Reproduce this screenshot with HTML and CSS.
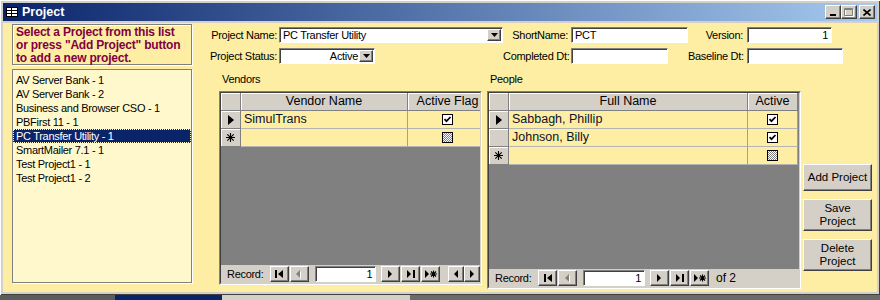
FILE: index.html
```html
<!DOCTYPE html>
<html lang="en">
  <head>
    <meta charset="UTF-8" />
    <title>Project</title>
    <link rel="stylesheet" href="styles.css">
  </head>
  <body>
    <div class="window">
      <div class="titlebar">
        <svg class="ticon" width="12" height="10" viewBox="0 0 12 10">
          <rect x="0.5" y="0.5" width="11" height="9" fill="#fff" stroke="#000" />
          <path d="M1 3.5H11M1 6.5H11M5.5 1V9" stroke="#000" />
        </svg>
        <span class="ttext">Project</span>
        <div class="tbtns">
          <span class="tbtn"><svg width="8" height="8" viewBox="0 0 8 8"><rect x="1" y="6" width="6" height="2" /></svg></span>
          <span class="tbtn"><svg width="10" height="9" viewBox="0 0 10 9"><path d="M1.5 1.5h8v7h-8z" fill="none" stroke="#fff" /><path d="M0.5 0.5h8v7h-8zM0.5 1.5h8" fill="none" stroke="#808080" /></svg></span>
          <span class="tbtn close"><svg width="8" height="7" viewBox="0 0 8 7"><path d="M0.5 0.5L7.5 6.5M7.5 0.5L0.5 6.5" stroke="#000" stroke-width="1.6" /></svg></span>
        </div>
      </div>

      <div class="form">
        <div class="side">
          <div class="hint">Select a Project from this list<br />or press "Add Project" button<br />to add a new project.</div>
          <ul class="plist">
            <li>AV Server Bank - 1</li>
            <li>AV Server Bank - 2</li>
            <li>Business and Browser CSO - 1</li>
            <li>PBFirst 11 - 1</li>
            <li class="sel">PC Transfer Utility - 1</li>
            <li>SmartMailer 7.1 - 1</li>
            <li>Test Project1 - 1</li>
            <li>Test Project1 - 2</li>
          </ul>
        </div>

        <div class="main">
          <div class="fields">
            <label class="l1">Project Name:</label>
            <div class="field combo">PC Transfer Utility<span class="drop"><svg width="7" height="4" viewBox="0 0 7 4"><path d="M0 0H7L3.5 4Z" /></svg></span></div>
            <label class="l2">ShortName:</label>
            <div class="field">PCT</div>
            <label class="l3">Version:</label>
            <div class="field num ver">1</div>

            <label class="l1">Project Status:</label>
            <div class="field combo status"><span class="val">Active</span><span class="drop"><svg width="7" height="4" viewBox="0 0 7 4"><path d="M0 0H7L3.5 4Z" /></svg></span></div>
            <label class="l2 lc">Completed Dt:</label>
            <div class="field cdt"></div>
            <label class="l3">Baseline Dt:</label>
            <div class="field bdt"></div>
          </div>

          <div class="lower">
            <div class="group vendors">
              <div class="caption">Vendors</div>
              <div class="sheet">
                <div class="inner">
                  <div class="body">
                    <div class="tbl v">
                      <div class="hd"></div>
                      <div class="hd">Vendor Name</div>
                      <div class="hd">Active Flag</div>

                      <div class="rs"><svg width="6" height="10" viewBox="0 0 6 10"><path d="M0 0L6 5L0 10Z" /></svg></div>
                      <div class="cell">SimulTrans</div>
                      <div class="cell ck"><svg width="11" height="11" viewBox="0 0 11 11"><rect x="0.5" y="0.5" width="10" height="10" fill="#fff" stroke="#000" /><path d="M2.5 5.2L4.5 7.2L8.5 3" fill="none" stroke="#000" stroke-width="1.7" /></svg></div>

                      <div class="rs"><svg width="9" height="9" viewBox="0 0 9 9"><path d="M4.5 0V9M0 4.5H9M1.3 1.3L7.7 7.7M7.7 1.3L1.3 7.7" stroke="#000" stroke-width="1.1" /></svg></div>
                      <div class="cell"></div>
                      <div class="cell ck"><span class="null"></span></div>
                    </div>
                  </div>
                  <div class="nav">
                    <span class="rec">Record:</span>
                    <span class="nb"><svg width="8" height="8" viewBox="0 0 8 8"><rect width="2" height="8" /><path d="M8 0V8L3 4Z" /></svg></span>
                    <span class="nb"><svg width="6" height="9" viewBox="0 0 6 9"><path d="M5 1V9L1 5Z" fill="#fff" /><path d="M4 0V8L0 4Z" fill="#808080" /></svg></span>
                    <span class="recno">1</span>
                    <span class="nb"><svg width="5" height="8" viewBox="0 0 5 8"><path d="M0 0V8L4 4Z" /></svg></span>
                    <span class="nb"><svg width="8" height="8" viewBox="0 0 8 8"><path d="M0 0V8L4 4Z" /><rect x="6" width="2" height="8" /></svg></span>
                    <span class="nb"><svg width="12" height="8" viewBox="0 0 12 8"><path d="M0 0V8L4 4Z" /><path d="M8.5 0.5V7.5M5 4H12M6 1.5L11 6.5M11 1.5L6 6.5" stroke="#000" stroke-width="1.1" /></svg></span>
                    <span class="nb sc first"><svg width="4" height="8" viewBox="0 0 4 8"><path d="M4 0V8L0 4Z" /></svg></span>
                    <span class="nb sc"><svg width="4" height="8" viewBox="0 0 4 8"><path d="M0 0V8L4 4Z" /></svg></span>
                  </div>
                </div>
              </div>
            </div>

            <div class="group people">
              <div class="caption">People</div>
              <div class="sheet">
                <div class="inner">
                  <div class="body">
                    <div class="tbl p">
                      <div class="hd"></div>
                      <div class="hd">Full Name</div>
                      <div class="hd">Active</div>

                      <div class="rs"><svg width="6" height="10" viewBox="0 0 6 10"><path d="M0 0L6 5L0 10Z" /></svg></div>
                      <div class="cell">Sabbagh, Phillip</div>
                      <div class="cell ck"><svg width="11" height="11" viewBox="0 0 11 11"><rect x="0.5" y="0.5" width="10" height="10" fill="#fff" stroke="#000" /><path d="M2.5 5.2L4.5 7.2L8.5 3" fill="none" stroke="#000" stroke-width="1.7" /></svg></div>

                      <div class="rs"></div>
                      <div class="cell">Johnson, Billy</div>
                      <div class="cell ck"><svg width="11" height="11" viewBox="0 0 11 11"><rect x="0.5" y="0.5" width="10" height="10" fill="#fff" stroke="#000" /><path d="M2.5 5.2L4.5 7.2L8.5 3" fill="none" stroke="#000" stroke-width="1.7" /></svg></div>

                      <div class="rs"><svg width="9" height="9" viewBox="0 0 9 9"><path d="M4.5 0V9M0 4.5H9M1.3 1.3L7.7 7.7M7.7 1.3L1.3 7.7" stroke="#000" stroke-width="1.1" /></svg></div>
                      <div class="cell"></div>
                      <div class="cell ck"><span class="null"></span></div>
                    </div>
                  </div>
                  <div class="nav">
                    <span class="rec">Record:</span>
                    <span class="nb"><svg width="8" height="8" viewBox="0 0 8 8"><rect width="2" height="8" /><path d="M8 0V8L3 4Z" /></svg></span>
                    <span class="nb"><svg width="6" height="9" viewBox="0 0 6 9"><path d="M5 1V9L1 5Z" fill="#fff" /><path d="M4 0V8L0 4Z" fill="#808080" /></svg></span>
                    <span class="recno">1</span>
                    <span class="nb"><svg width="5" height="8" viewBox="0 0 5 8"><path d="M0 0V8L4 4Z" /></svg></span>
                    <span class="nb"><svg width="8" height="8" viewBox="0 0 8 8"><path d="M0 0V8L4 4Z" /><rect x="6" width="2" height="8" /></svg></span>
                    <span class="nb"><svg width="12" height="8" viewBox="0 0 12 8"><path d="M0 0V8L4 4Z" /><path d="M8.5 0.5V7.5M5 4H12M6 1.5L11 6.5M11 1.5L6 6.5" stroke="#000" stroke-width="1.1" /></svg></span>
                    <span class="of">of 2</span>
                  </div>
                </div>
              </div>
            </div>

            <div class="actions">
              <div class="btn add">Add Project</div>
              <div class="btn">Save<br />Project</div>
              <div class="btn">Delete<br />Project</div>
            </div>
          </div>
        </div>
      </div>
    </div>
    <div class="desk">
      <span class="seg s1"></span>
      <span class="seg s2"></span>
      <span class="seg s3"></span>
      <span class="seg s4"></span>
    </div>
  </body>
</html>
```

FILE: styles.css
```css
* {
  margin: 0;
  padding: 0;
  box-sizing: border-box;
}
html,
body {
  width: 880px;
  height: 300px;
  overflow: hidden;
  background: #6b6b6b;
  font-family: "Liberation Sans", Arial, sans-serif;
  font-size: 11px;
  letter-spacing: -0.3px;
  color: #000;
}
/* window frame */
.window {
  height: 295px;
  padding: 3px;
  background: #d4d0c8;
  box-shadow: inset 1px 1px #fff, inset -1px -1px #404040;
  display: flex;
  flex-direction: column;
}
.titlebar {
  height: 18px;
  flex: none;
  display: flex;
  align-items: center;
  padding: 0 2px 0 3px;
  background: linear-gradient(to right, #0a246a, #a6caf0);
}
.ticon {
  margin-right: 4px;
}
.ttext {
  color: #fff;
  font-weight: bold;
  font-size: 12.5px;
  letter-spacing: 0;
}
.tbtns {
  margin-left: auto;
  display: flex;
}
.tbtn {
  width: 16px;
  height: 14px;
  display: flex;
  align-items: center;
  justify-content: center;
  background: #d4d0c8;
  border: 1px solid;
  border-color: #fff #404040 #404040 #fff;
  box-shadow: inset -1px -1px #808080;
}
.tbtn.close {
  margin-left: 2px;
}
/* form body */
.form {
  margin-top: 2px;
  flex: 1;
  display: flex;
  background: #fdeea4;
}
.side {
  width: 180px;
  margin-left: 9px;
  padding-top: 1px;
  display: flex;
  flex-direction: column;
  gap: 4px;
}
.hint {
  height: 41px;
  padding: 1px 3px;
  border: 1px solid #808080;
  box-shadow: inset 1px 1px #fff, 1px 1px #fff;
  font-size: 12px;
  font-weight: bold;
  letter-spacing: -0.2px;
  line-height: 13px;
  color: #800040;
  white-space: nowrap;
}
.plist {
  list-style: none;
  height: 214px;
  padding-top: 3px;
  border: 1px solid #808080;
  box-shadow: 1px 1px #fff;
  background: #fff8cc;
}
.plist li {
  height: 14px;
  line-height: 14px;
  padding-left: 3px;
  white-space: nowrap;
}
.plist .sel {
  background: #0a246a;
  color: #fff;
  outline: 1px dotted #fff8cc;
  outline-offset: -1px;
}
.main {
  flex: 1;
}
.fields {
  display: grid;
  grid-template-columns: 79px 224px 68px 117px 59px 96px;
  grid-template-rows: 16px 16px;
  row-gap: 5px;
  align-items: center;
  margin: 4px 0 0 8px;
}
.fields label {
  text-align: right;
  white-space: nowrap;
  padding-right: 2px;
}
.fields .l2 {
  padding-right: 3px;
}
.fields .lc {
  padding-right: 5px;
}
.fields .l3 {
  padding-right: 4px;
}
.field {
  height: 16px;
  padding: 0 2px 0 3px;
  line-height: 14px;
  white-space: nowrap;
  overflow: hidden;
  background: #fff;
  border: 1px solid;
  border-color: #808080 #fff #fff #808080;
  box-shadow: inset 1px 1px #404040;
}
.combo {
  display: flex;
  align-items: center;
  padding-right: 1px;
}
.drop {
  margin-left: auto;
  width: 14px;
  height: 12px;
  flex: none;
  display: flex;
  align-items: center;
  justify-content: center;
  background: #d4d0c8;
  border: 1px solid;
  border-color: #fff #404040 #404040 #fff;
  box-shadow: inset -1px -1px #808080;
}
.status {
  width: 96px;
  justify-self: start;
}
.status .val {
  margin-left: auto;
  margin-right: 1px;
}
.status .drop {
  margin-left: 0;
}
.num {
  text-align: right;
  padding-right: 3px;
}
.ver {
  width: 85px;
  justify-self: start;
}
.cdt {
  width: 97px;
  justify-self: start;
}
/* subforms */
.lower {
  display: flex;
  align-items: flex-start;
  margin-top: 9px;
  padding-left: 27px;
}
.group.vendors {
  width: 263px;
}
.group.people {
  width: 314px;
  margin-left: 5px;
}
.caption {
  height: 18px;
  line-height: 13px;
  padding-left: 3px;
}
.sheet {
  border: 1px solid;
  border-color: #808080 #fff #fff #808080;
}
.vendors .sheet {
  height: 194px;
}
.people .sheet {
  height: 198px;
}
.inner {
  height: 100%;
  display: flex;
  flex-direction: column;
  border: 1px solid;
  border-color: #404040 #d4d0c8 #d4d0c8 #404040;
  background: #808080;
}
.body {
  flex: 1;
  overflow: hidden;
}
.tbl {
  display: grid;
  grid-auto-rows: 18px;
  font-size: 12.5px;
  letter-spacing: 0;
}
.tbl.v {
  grid-template-columns: 20px 167px 80px;
}
.tbl.p {
  grid-template-columns: 20px 239px 50px;
}
.hd,
.rs {
  background: #d4d0c8;
  border-right: 1px solid #808080;
  border-bottom: 1px solid #808080;
  box-shadow: inset 1px 1px #fff;
  text-align: center;
  line-height: 17px;
  white-space: nowrap;
  overflow: hidden;
}
.rs {
  display: flex;
  align-items: center;
  justify-content: center;
}
.cell {
  background: #fdeea4;
  border-right: 1px solid #a0a0a0;
  border-bottom: 1px solid #b4b4b4;
  padding-left: 3px;
  line-height: 17px;
  white-space: nowrap;
  overflow: hidden;
  color: #10102a;
}
.cell.ck {
  display: flex;
  justify-content: center;
  padding: 3px 0 0;
}
.null {
  width: 11px;
  height: 11px;
  border: 1px solid #000;
  background: repeating-conic-gradient(#808080 0 25%, #fff 0 50%) 0 0 / 2px 2px;
}
.nav {
  height: 18px;
  flex: none;
  display: flex;
  align-items: center;
  padding-left: 6px;
  background: #d4d0c8;
}
.rec {
  width: 43px;
}
.nb {
  width: 19px;
  height: 16px;
  margin-right: 1px;
  display: flex;
  align-items: center;
  justify-content: center;
  background: #d4d0c8;
  border: 1px solid;
  border-color: #fff #404040 #404040 #fff;
  box-shadow: inset -1px -1px #808080;
}
.nb.sc {
  width: 16px;
  margin-right: 0;
}
.nb.first {
  margin-left: 7px;
}
.recno {
  width: 62px;
  height: 16px;
  margin: 0 5px;
  padding-right: 3px;
  text-align: right;
  line-height: 14px;
  background: #fff;
  border: 1px solid;
  border-color: #808080 #fff #fff #808080;
  box-shadow: inset 1px 1px #404040;
}
.of {
  margin-left: 6px;
  font-size: 12px;
  letter-spacing: 0;
}
/* command buttons */
.actions {
  width: 69px;
  margin: 91px 0 0 2px;
  display: flex;
  flex-direction: column;
  gap: 8px;
}
.btn {
  height: 32px;
  display: flex;
  align-items: center;
  justify-content: center;
  text-align: center;
  font-size: 11.5px;
  letter-spacing: 0;
  line-height: 13px;
  background: #d4d0c8;
  border: 1px solid;
  border-color: #fff #404040 #404040 #fff;
  box-shadow: inset -1px -1px #808080;
}
.btn.add {
  height: 27px;
}
/* windows behind */
.desk {
  height: 5px;
  display: flex;
}
.seg {
  height: 100%;
}
.s1 {
  width: 115px;
  background: #5c5c5c;
}
.s2 {
  width: 107px;
  background: #0a246a;
}
.s3 {
  width: 188px;
  background: #d4d0c8;
}
.s4 {
  flex: 1;
  background: #6b6b6b;
}
```
